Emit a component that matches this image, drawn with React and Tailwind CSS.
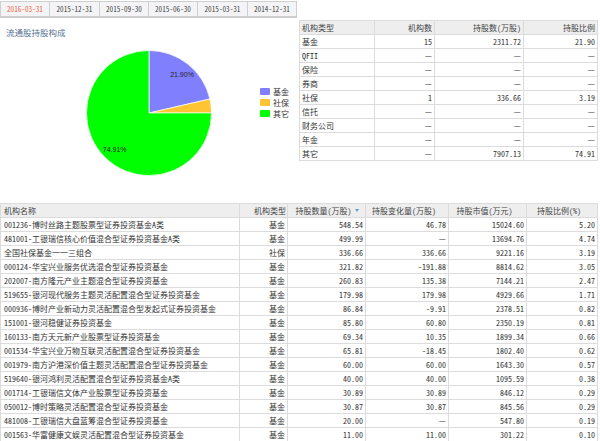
const TABS = ['2016-03-31', '2015-12-31', '2015-09-30', '2015-06-30', '2015-03-31', '2014-12-31']
const TAB_WIDTHS = ['w-[49px]', 'w-[50px]', 'w-[49px]', 'w-[49px]', 'w-[50px]', 'w-[49px]']

const SUMMARY = [
  ['基金', '15', '2311.72', '21.90'],
  ['QFII', '—', '—', '—'],
  ['保险', '—', '—', '—'],
  ['券商', '—', '—', '—'],
  ['社保', '1', '336.66', '3.19'],
  ['信托', '—', '—', '—'],
  ['财务公司', '—', '—', '—'],
  ['年金', '—', '—', '—'],
  ['其它', '—', '7907.13', '74.91'],
]

const HOLDERS = [
  ['001236-博时丝路主题股票型证券投资基金A类', '基金', '548.54', '46.78', '15024.60', '5.20'],
  ['481001-工银瑞信核心价值混合型证券投资基金A类', '基金', '499.99', '—', '13694.76', '4.74'],
  ['全国社保基金一一三组合', '社保', '336.66', '336.66', '9221.16', '3.19'],
  ['000124-华宝兴业服务优选混合型证券投资基金', '基金', '321.82', '-191.88', '8814.62', '3.05'],
  ['202007-南方隆元产业主题混合型证券投资基金', '基金', '260.83', '135.38', '7144.21', '2.47'],
  ['519655-银河现代服务主题灵活配置混合型证券投资基金', '基金', '179.98', '179.98', '4929.66', '1.71'],
  ['000936-博时产业新动力灵活配置混合型发起式证券投资基金', '基金', '86.84', '-9.91', '2378.51', '0.82'],
  ['151001-银河稳健证券投资基金', '基金', '85.80', '60.80', '2350.19', '0.81'],
  ['160133-南方天元新产业股票型证券投资基金', '基金', '69.34', '10.35', '1899.34', '0.66'],
  ['001534-华宝兴业万物互联灵活配置混合型证券投资基金', '基金', '65.81', '-18.45', '1802.40', '0.62'],
  ['001979-南方沪港深价值主题灵活配置混合型证券投资基金', '基金', '60.00', '60.00', '1643.30', '0.57'],
  ['519640-银河鸿利灵活配置混合型证券投资基金A类', '基金', '40.00', '40.00', '1095.59', '0.38'],
  ['001714-工银瑞信文体产业股票型证券投资基金', '基金', '30.89', '30.89', '846.12', '0.29'],
  ['050012-博时策略灵活配置混合型证券投资基金', '基金', '30.87', '30.87', '845.56', '0.29'],
  ['481008-工银瑞信大盘蓝筹混合型证券投资基金', '基金', '20.00', '—', '547.80', '0.19'],
  ['001563-华富健康文娱灵活配置混合型证券投资基金', '基金', '11.00', '11.00', '301.22', '0.10'],
]

const LEGEND = [
  ['基金', 'bg-[#8080ff]'],
  ['社保', 'bg-[#ffc433]'],
  ['其它', 'bg-[#00ff00]'],
]

const cell = 'h-[14px] p-0 border border-[#dcdcdc] leading-[13px] whitespace-nowrap overflow-hidden'
const head = 'bg-[#eeeeee] font-normal text-[#444]'

function PieChart() {
  return (
    <svg width="128" height="128" viewBox="0 0 128 128" className="shrink-0">
      <path d="M64 64 L64 1.5 A62.5 62.5 0 0 1 124.9 50 Z" fill="#8080ff" stroke="#fff" strokeWidth="0.7" />
      <path d="M64 64 L124.9 50 A62.5 62.5 0 0 1 126.5 64 Z" fill="#ffc433" stroke="#fff" strokeWidth="0.7" />
      <path d="M64 64 L126.5 64 A62.5 62.5 0 1 1 64 1.5 Z" fill="#00ff00" stroke="#fff" strokeWidth="0.7" />
      <text x="97" y="28" textAnchor="middle" fontSize="7" fill="#222" fontFamily="Liberation Sans, sans-serif">21.90%</text>
      <text x="29.7" y="102.5" textAnchor="middle" fontSize="7" fill="#222" fontFamily="Liberation Sans, sans-serif">74.91%</text>
    </svg>
  )
}

export default function App() {
  return (
    <div className="w-[600px] h-[441px] overflow-hidden bg-white text-[8px] text-[#333] font-['Noto_Sans_CJK_SC','Liberation_Sans',sans-serif] [font-feature-settings:'hwid']">
      <div className="flex h-[203px]">
        <div className="w-[299px] shrink-0 pt-px">
          <div className="flex h-[17px] w-[297px] border-y border-l border-b-2 border-[#cfcfcf] bg-[#f4f4f6]">
            {TABS.map((t, i) => (
              <div
                key={t}
                className={`${TAB_WIDTHS[i]} flex items-center justify-center border-r border-[#cfcfcf] text-[7.2px] ${i === 0 ? 'text-[#e8643c]' : 'text-[#444]'}`}
              >
                {t}
              </div>
            ))}
          </div>
          <div className="pl-[6px] pt-[8px] text-[8.5px] leading-[12px] text-[#56718f]">流通股持股构成</div>
          <div className="flex pl-[85px] pt-[11px]">
            <PieChart />
            <div className="ml-[47px] mt-[39px] flex flex-col gap-[4px]">
              {LEGEND.map(([label, color]) => (
                <div key={label} className="flex h-[7px] items-center gap-[3px] leading-[7px]">
                  <span className={`h-[7px] w-[10px] rounded-[1px] ${color}`} />
                  <span>{label}</span>
                </div>
              ))}
            </div>
          </div>
        </div>

        <div className="pt-[20px]">
          <table className="w-[298px] table-fixed border-collapse">
            <colgroup>
              <col className="w-[75px]" />
              <col className="w-[60px]" />
              <col className="w-[89px]" />
              <col className="w-[74px]" />
            </colgroup>
            <thead>
              <tr>
                <th className={`${cell} ${head} pl-[2px] text-left`}>机构类型</th>
                <th className={`${cell} ${head} pr-[2px] text-right`}>机构数</th>
                <th className={`${cell} ${head} pr-[2px] text-right`}>持股数(万股)</th>
                <th className={`${cell} ${head} pr-[2px] text-right`}>持股比例</th>
              </tr>
            </thead>
            <tbody>
              {SUMMARY.map((row) => (
                <tr key={row[0]}>
                  {row.map((v, i) => (
                    <td key={i} className={`${cell} ${i === 0 ? 'pl-[2px] text-left' : 'pr-[2px] text-right'}`}>{v}</td>
                  ))}
                </tr>
              ))}
            </tbody>
          </table>
        </div>
      </div>

      <table className="w-[597px] table-fixed border-collapse">
        <colgroup>
          <col className="w-[239px]" />
          <col className="w-[48px]" />
          <col className="w-[78px]" />
          <col className="w-[83px]" />
          <col className="w-[78px]" />
          <col className="w-[71px]" />
        </colgroup>
        <thead>
          <tr>
            <th className={`${cell} ${head} pl-[3px] text-left`}>机构名称</th>
            <th className={`${cell} ${head} pr-[1px] text-right`}>机构类型</th>
            <th className={`${cell} ${head} relative pr-[6px] text-center`}>
              持股数量(万股)
              <span className="absolute right-[6px] top-[5px] h-0 w-0 border-x-[2.5px] border-t-[3px] border-x-transparent border-t-[#5b9bd5]" />
            </th>
            <th className={`${cell} ${head} pr-[6px] text-center`}>持股变化量(万股)</th>
            <th className={`${cell} ${head} pr-[6px] text-center`}>持股市值(万元)</th>
            <th className={`${cell} ${head} pr-[6px] text-center`}>持股比例(%)</th>
          </tr>
        </thead>
        <tbody>
          {HOLDERS.map((row) => (
            <tr key={row[0]}>
              {row.map((v, i) => (
                <td key={i} className={`${cell} ${i === 0 ? 'pl-[3px] text-left' : 'pr-[2px] text-right'}`}>{v}</td>
              ))}
            </tr>
          ))}
        </tbody>
      </table>
    </div>
  )
}
